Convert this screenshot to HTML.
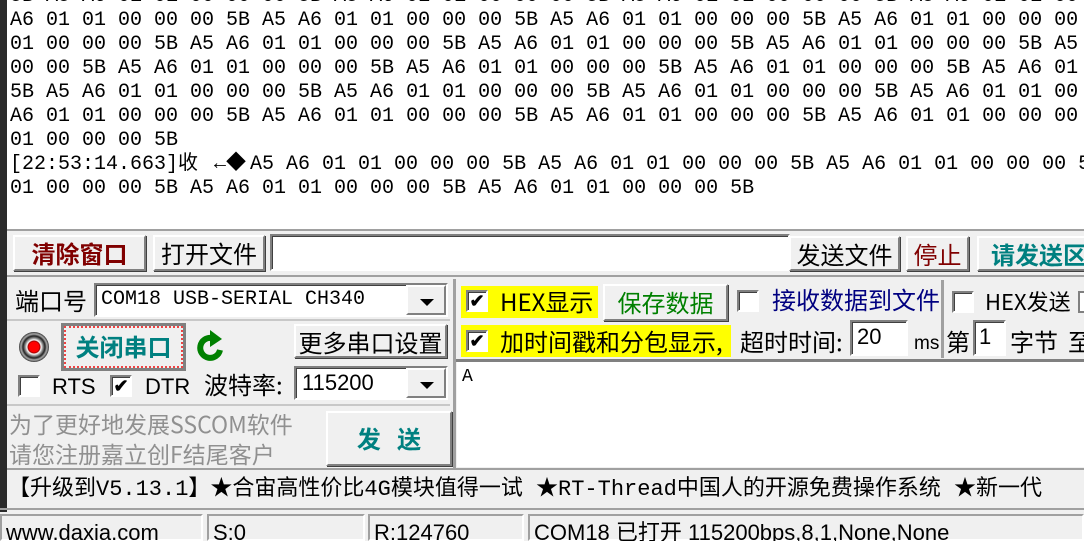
<!DOCTYPE html>
<html><head><meta charset="utf-8"><style>
*{margin:0;padding:0;box-sizing:border-box}
html,body{width:1084px;height:541px;overflow:hidden}
body{background:#f0f0f0;position:relative;font-family:"Liberation Sans","Noto Sans CJK SC",sans-serif}
.a{position:absolute;white-space:nowrap}
#hex{position:absolute;left:7px;top:0;width:1077px;height:229px;background:#fff;overflow:hidden}
#hex div{position:absolute;left:3px;font:20px/24px "Liberation Mono","Noto Sans CJK SC",monospace;color:#000;white-space:pre}
.strip{position:absolute;left:0;top:0;width:7px;height:512px;background:#2a2a2a}
.btn{position:absolute;background:#f0f0f0;border:2px solid;border-color:#fff #808080 #808080 #fff;box-shadow:1px 1px 0 #404040;text-align:center;font-size:24px;font-family:"Noto Sans CJK SC",sans-serif;line-height:31px;overflow:hidden}
.sunk{position:absolute;background:#fff;border:2px solid;border-color:#808080 #fff #fff #808080;box-shadow:inset 1px 1px 0 #404040}
.cb{position:absolute;width:22px;height:22px;background:#fff;border:2px solid;border-color:#808080 #fff #fff #808080;box-shadow:inset 1px 1px 0 #404040;font-size:18px;line-height:18px;text-align:center;font-weight:bold}
.t{position:absolute;white-space:nowrap;font-size:24px;font-family:"Noto Sans CJK SC",sans-serif;line-height:30px;color:#000}
.dd{position:absolute;right:0;top:0;width:40px;height:100%;background:#f0f0f0;border:2px solid;border-color:#fff #808080 #808080 #fff}
.dd:after{content:"";position:absolute;left:12px;top:12px;border:7px solid transparent;border-top:7px solid #000;border-bottom:0}
.yl{position:absolute;background:#ff0}
</style></head><body>
<div class="strip"></div>
<div id="hex">
<div style="top:-15px">5B A5 A6 01 01 00 00 00 5B A5 A6 01 01 00 00 00 5B A5 A6 01 01 00 00 00 5B A5 A6 01 01 00 00 00 5B A5 A6 01</div>
<div style="top:9px">A6 01 01 00 00 00 5B A5 A6 01 01 00 00 00 5B A5 A6 01 01 00 00 00 5B A5 A6 01 01 00 00 00 5B A5 A6 01 01 00 00 00</div>
<div style="top:33px">01 00 00 00 5B A5 A6 01 01 00 00 00 5B A5 A6 01 01 00 00 00 5B A5 A6 01 01 00 00 00 5B A5 A6 01 01 00 00 00 5B A5</div>
<div style="top:57px">00 00 5B A5 A6 01 01 00 00 00 5B A5 A6 01 01 00 00 00 5B A5 A6 01 01 00 00 00 5B A5 A6 01 01 00 00 00 5B A5 A6 01</div>
<div style="top:81px">5B A5 A6 01 01 00 00 00 5B A5 A6 01 01 00 00 00 5B A5 A6 01 01 00 00 00 5B A5 A6 01 01 00 00 00 5B A5 A6 01 01 00</div>
<div style="top:105px">A6 01 01 00 00 00 5B A5 A6 01 01 00 00 00 5B A5 A6 01 01 00 00 00 5B A5 A6 01 01 00 00 00 5B A5 A6 01 01 00 00 00</div>
<div style="top:129px">01 00 00 00 5B</div>
<div style="top:153px">[22:53:14.663]<span style="display:inline-block;width:24px">收</span><span style="display:inline-block;width:24px;text-align:right">←</span><span style="display:inline-block;width:24px">◆</span>A5 A6 01 01 00 00 00 5B A5 A6 01 01 00 00 00 5B A5 A6 01 01 00 00 00 5B</div>
<div style="top:177px">01 00 00 00 5B A5 A6 01 01 00 00 00 5B A5 A6 01 01 00 00 00 5B</div>
</div>
<div class="a" style="left:7px;top:229px;width:1077px;height:2px;background:#a0a0a0"></div>

<div class="btn" style="left:13px;top:235px;width:133px;height:36px;color:#800000;font-weight:bold">清除窗口</div>
<div class="btn" style="left:153px;top:235px;width:112px;height:36px">打开文件</div>
<div class="sunk" style="left:270px;top:234px;width:520px;height:37px"></div>
<div class="btn" style="left:789px;top:236px;width:111px;height:35px">发送文件</div>
<div class="btn" style="left:906px;top:236px;width:63px;height:35px;color:#800000">停止</div>
<div class="btn" style="left:977px;top:236px;width:115px;height:35px;color:#008080;font-weight:bold;text-align:left;padding-left:12px">请发送区</div>
<div class="a" style="left:7px;top:275px;width:1077px;height:2px;background:#a0a0a0"></div>

<div class="t" style="left:15px;top:285px">端口号</div>
<div class="sunk" style="left:94px;top:283px;width:354px;height:34px"><span class="a" style="left:5px;top:3px;font:20px/24px 'Liberation Mono',monospace">COM18 USB-SERIAL CH340</span><div class="dd"></div></div>
<div class="a" style="left:7px;top:319px;width:443px;height:2px;background:#c8c8c8"></div>
<div class="a" style="left:19px;top:332px;width:30px;height:30px;border-radius:50%;background:radial-gradient(circle,#f00 0 5px,#900 6px,#fff 7px,#888 9px,#222 11px,#aaa 13px,#333 15px)"></div>
<div class="a" style="left:61px;top:323px;width:125px;height:48px;background:#808080;padding:3px"><div style="background:#f0f0f0;height:100%;border:2px dotted #e44;text-align:center;font:bold 24px/36px 'Noto Sans CJK SC',sans-serif;color:#008080">关闭串口</div></div>
<svg class="a" style="left:196px;top:330px" width="32" height="36" viewBox="0 0 32 36"><path d="M24 20a10 10 0 1 1-8-12" fill="none" stroke="#008000" stroke-width="6"/><path d="M14 0l12 9-12 8z" fill="#008000"/></svg>
<div class="btn" style="left:294px;top:324px;width:153px;height:34px">更多串口设置</div>
<div class="cb" style="left:18px;top:375px"></div>
<div class="t" style="left:52px;top:372px;font-family:'Liberation Sans',sans-serif;font-size:22px">RTS</div>
<div class="cb" style="left:110px;top:375px">✔</div>
<div class="t" style="left:145px;top:372px;font-family:'Liberation Sans',sans-serif;font-size:22px">DTR</div>
<div class="t" style="left:204px;top:369px">波特率:</div>
<div class="sunk" style="left:294px;top:366px;width:154px;height:34px"><span class="a" style="left:6px;top:3px;font:22px/24px 'Liberation Sans',sans-serif">115200</span><div class="dd"></div></div>
<div class="a" style="left:7px;top:404px;width:443px;height:2px;background:#c8c8c8"></div>
<div class="t" style="left:9px;top:408px;color:#909090;font-size:23px">为了更好地发展SSCOM软件</div>
<div class="t" style="left:9px;top:438px;color:#909090;font-size:23px">请您注册嘉立创F结尾客户</div>
<div class="btn" style="left:326px;top:411px;width:126px;height:55px;color:#008080;font-weight:bold;line-height:50px">发&nbsp;&nbsp;&nbsp;送</div>
<div class="a" style="left:453px;top:279px;width:3px;height:190px;background:#a0a0a0"></div>

<div class="yl" style="left:461px;top:286px;width:137px;height:32px"></div>
<div class="cb" style="left:466px;top:290px">✔</div>
<div class="t" style="left:500px;top:286px">HEX显示</div>
<div class="btn" style="left:603px;top:284px;width:125px;height:37px;color:#008000">保存数据</div>
<div class="cb" style="left:737px;top:290px"></div>
<div class="t" style="left:772px;top:284px;color:#000080">接收数据到文件</div>
<div class="a" style="left:941px;top:280px;width:3px;height:78px;background:#a0a0a0"></div>
<div class="cb" style="left:952px;top:291px"></div>
<div class="t" style="left:985px;top:286px;font-size:22px">HEX发送</div>
<div class="a" style="left:1078px;top:291px;width:8px;height:22px;border:2px solid #808080;background:#fff"></div>
<div class="yl" style="left:461px;top:325px;width:270px;height:32px"></div>
<div class="cb" style="left:466px;top:330px">✔</div>
<div class="t" style="left:500px;top:326px">加时间戳和分包显示,</div>
<div class="t" style="left:740px;top:326px">超时时间:</div>
<div class="sunk" style="left:850px;top:320px;width:58px;height:36px"><span class="a" style="left:5px;top:3px;font:22px/24px 'Liberation Sans',sans-serif">20</span></div>
<div class="t" style="left:914px;top:329px;font-size:19px;font-family:'Liberation Sans',sans-serif">ms</div>
<div class="t" style="left:946px;top:326px">第</div>
<div class="sunk" style="left:973px;top:320px;width:33px;height:36px"><span class="a" style="left:4px;top:3px;font:22px/24px 'Liberation Sans',sans-serif">1</span></div>
<div class="t" style="left:1010px;top:326px">字节</div>
<div class="t" style="left:1068px;top:326px">至</div>
<div class="a" style="left:456px;top:359px;width:628px;height:3px;background:#808080"></div>
<div class="a" style="left:457px;top:362px;width:627px;height:105px;background:#fff"><span class="a" style="left:5px;top:4px;font:18px/22px 'Liberation Mono',monospace">A</span></div>
<div class="a" style="left:7px;top:468px;width:1077px;height:2px;background:#a0a0a0"></div>

<div class="t" style="left:8px;top:475px;font-family:'Liberation Mono','Noto Sans CJK SC',monospace;font-size:22px;line-height:30px">【升级到V5.13.1】★合宙高性价比4G模块值得一试 ★RT-Thread中国人的开源免费操作系统 ★新一代</div>
<div class="a" style="left:0;top:508px;width:1084px;height:2px;background:#a0a0a0"></div>
<div class="a" style="left:0;top:512px;width:1084px;height:29px;background:#f0f0f0"></div>
<div class="a" style="left:0;top:514px;width:203px;height:27px;border:2px solid;border-color:#a0a0a0 #fff #fff #a0a0a0"></div>
<div class="a" style="left:207px;top:514px;width:158px;height:27px;border:2px solid;border-color:#a0a0a0 #fff #fff #a0a0a0"></div>
<div class="a" style="left:368px;top:514px;width:156px;height:27px;border:2px solid;border-color:#a0a0a0 #fff #fff #a0a0a0"></div>
<div class="a" style="left:528px;top:514px;width:556px;height:27px;border:2px solid;border-color:#a0a0a0 #fff #fff #a0a0a0"></div>
<div class="t" style="left:6px;top:518px;font-family:'Liberation Sans','Noto Sans CJK SC',sans-serif;font-size:22px">www.daxia.com</div>
<div class="t" style="left:213px;top:518px;font-family:'Liberation Sans',sans-serif;font-size:22px">S:0</div>
<div class="t" style="left:374px;top:518px;font-family:'Liberation Sans',sans-serif;font-size:22px">R:124760</div>
<div class="t" style="left:534px;top:518px;font-family:'Liberation Sans','Noto Sans CJK SC',sans-serif;font-size:22px">COM18 已打开  115200bps,8,1,None,None</div>
</body></html>
